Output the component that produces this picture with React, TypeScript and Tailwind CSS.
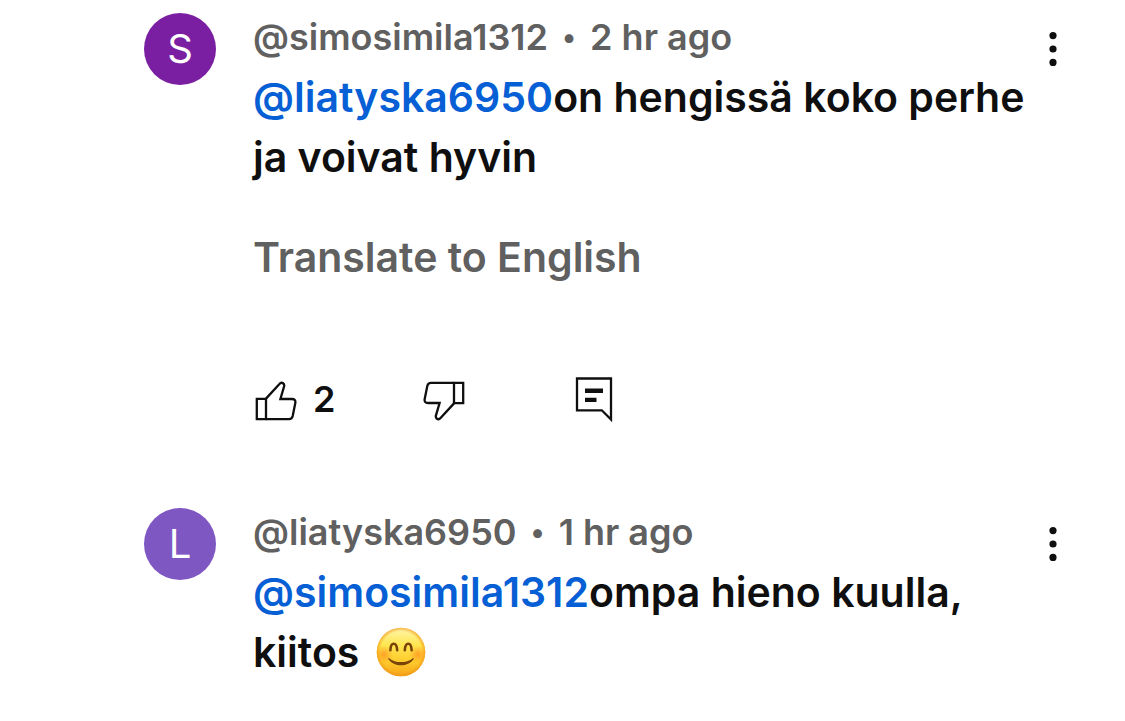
import React from 'react';

interface CommentData {
  id: number;
  author: string;
  time: string;
  initial: string;
  avatarClass: string;
  replyTo: string;
  text: string;
  smile?: boolean;
  likes?: number;
}

const comments: CommentData[] = [
  {
    id: 1,
    author: '@simosimila1312',
    time: '2 hr ago',
    initial: 'S',
    avatarClass: 'bg-[#7b1fa2]',
    replyTo: '@liatyska6950',
    text: 'on hengissä koko perhe ja voivat hyvin',
    likes: 2,
  },
  {
    id: 2,
    author: '@liatyska6950',
    time: '1 hr ago',
    initial: 'L',
    avatarClass: 'bg-[#7e57c2]',
    replyTo: '@simosimila1312',
    text: 'ompa hieno kuulla, kiitos',
    smile: true,
  },
];

const ThumbIcon = ({ className = '' }: { className?: string }) => (
  <span className="block pt-1">
    <svg viewBox="0 0 42 40" fill="none" stroke="currentColor" strokeWidth="2.3" className={`h-10 w-[42px] ${className}`} aria-hidden="true">
      <path d="M1.8 17.8H11V38.2H1.8Z" />
      <path d="M11 17.6L24.2 3.2C25.6 1.6 27.2 1.6 28.3 2.5C29.3 3.3 29.4 4.2 29.1 5.4L25.4 18H37C39.5 18 40.8 19.5 40.3 22L37.7 35C37.2 37.2 36.1 38.2 34 38.2H11" />
    </svg>
  </span>
);

const ReplyIcon = () => (
  <svg viewBox="0 0 38 47" fill="none" stroke="currentColor" className="h-[47px] w-[38px]" aria-hidden="true">
    <path d="M2 2.5H36V43.5L26.8 34.3H2Z" strokeWidth="2.3" />
    <path d="M10 14.7H28M10 23.9H21.5" strokeWidth="4.4" />
  </svg>
);

const SmileEmoji = () => (
  <svg viewBox="0 0 50 50" className="my-[5px] ml-1.5 inline-block size-[50px] align-top" role="img" aria-label="Smiling face">
    <defs>
      <linearGradient id="face" x1="0" y1="0" x2="0" y2="1">
        <stop offset="0" stopColor="#fff6b0" />
        <stop offset="0.35" stopColor="#ffe650" />
        <stop offset="0.7" stopColor="#fecb2c" />
        <stop offset="1" stopColor="#f5a31a" />
      </linearGradient>
      <radialGradient id="rim">
        <stop offset="0.84" stopColor="#f39b16" stopOpacity="0" />
        <stop offset="1" stopColor="#ee9414" stopOpacity="0.7" />
      </radialGradient>
      <radialGradient id="blush">
        <stop offset="0" stopColor="#ff7a1a" stopOpacity="0.6" />
        <stop offset="1" stopColor="#ff8a1a" stopOpacity="0" />
      </radialGradient>
      <clipPath id="head">
        <circle cx="25" cy="25" r="24.3" />
      </clipPath>
    </defs>
    <circle cx="25" cy="25" r="24.3" fill="url(#face)" />
    <circle cx="25" cy="25" r="24.3" fill="url(#rim)" />
    <g clipPath="url(#head)">
      <circle cx="8" cy="27.5" r="9" fill="url(#blush)" />
      <circle cx="42" cy="27.5" r="9" fill="url(#blush)" />
    </g>
    <g fill="none" stroke="#7a4308" strokeLinecap="round">
      <path d="M14.4 23.3C14.7 14.5 20.7 14.5 21.2 23.3" strokeWidth="2.6" />
      <path d="M28.8 23.3C29.3 14.5 35.3 14.5 35.6 23.3" strokeWidth="2.6" />
    </g>
    <path d="M13.4 31.4C19 36.2 31 36.2 36.6 31.4C37.4 30.7 38.1 31.4 37.5 32.3C31.8 40.3 18.2 40.3 12.5 32.3C11.9 31.4 12.6 30.7 13.4 31.4Z" fill="#7a4308" />
  </svg>
);

const Comment = ({ comment }: { comment: CommentData }) => (
  <article className="flex items-start">
    <div className={`flex size-[72px] shrink-0 items-center justify-center rounded-full text-[40px] leading-none text-white ${comment.avatarClass}`}>
      {comment.initial}
    </div>

    <div className="ml-[37px] min-w-0 flex-1">
      <header className="flex items-center gap-3.5 text-[36px] leading-[48px] font-semibold text-[#606060]">
        <span>{comment.author}</span>
        <span className="text-[28px]">•</span>
        <span>{comment.time}</span>
      </header>
      <p className="mt-1.5 text-[41px] leading-[60px] font-semibold text-[#0f0f0f]">
        <a href="#" className="text-[#065fd4]">{comment.replyTo}</a>
        {comment.text}
        {comment.smile && <> <SmileEmoji /></>}
      </p>

      {comment.likes !== undefined && (
        <>
          <button type="button" className="mt-[42px] block text-[41px] leading-[56px] font-semibold text-[#606060]">
            Translate to English
          </button>
          <div className="mt-[90px] mb-[85px] flex h-12 items-center text-[#0f0f0f]">
            <button type="button" aria-label="Like" className="flex w-[168px] items-center gap-4 pl-0.5 text-[36px] leading-[48px] font-semibold">
              <ThumbIcon />
              {comment.likes}
            </button>
            <button type="button" aria-label="Dislike" className="w-[154px] pl-0.5">
              <ThumbIcon className="rotate-180" />
            </button>
            <button type="button" aria-label="Reply">
              <ReplyIcon />
            </button>
          </div>
        </>
      )}
    </div>

    <button type="button" aria-label="More actions" className="flex h-[72px] w-4 shrink-0 items-center justify-center text-[#0f0f0f]">
      <svg viewBox="0 0 8 36" fill="currentColor" className="h-9 w-2" aria-hidden="true">
        <circle cx="4" cy="4.6" r="3.6" />
        <circle cx="4" cy="18" r="3.6" />
        <circle cx="4" cy="31.4" r="3.6" />
      </svg>
    </button>
  </article>
);

const App: React.FC = () => {
  return (
    <main className="min-h-screen bg-white pt-[13px] pr-16 pl-36 font-['Inter','Liberation_Sans',sans-serif]">
      {comments.map((comment) => (
        <Comment key={comment.id} comment={comment} />
      ))}
    </main>
  );
};

export default App;
